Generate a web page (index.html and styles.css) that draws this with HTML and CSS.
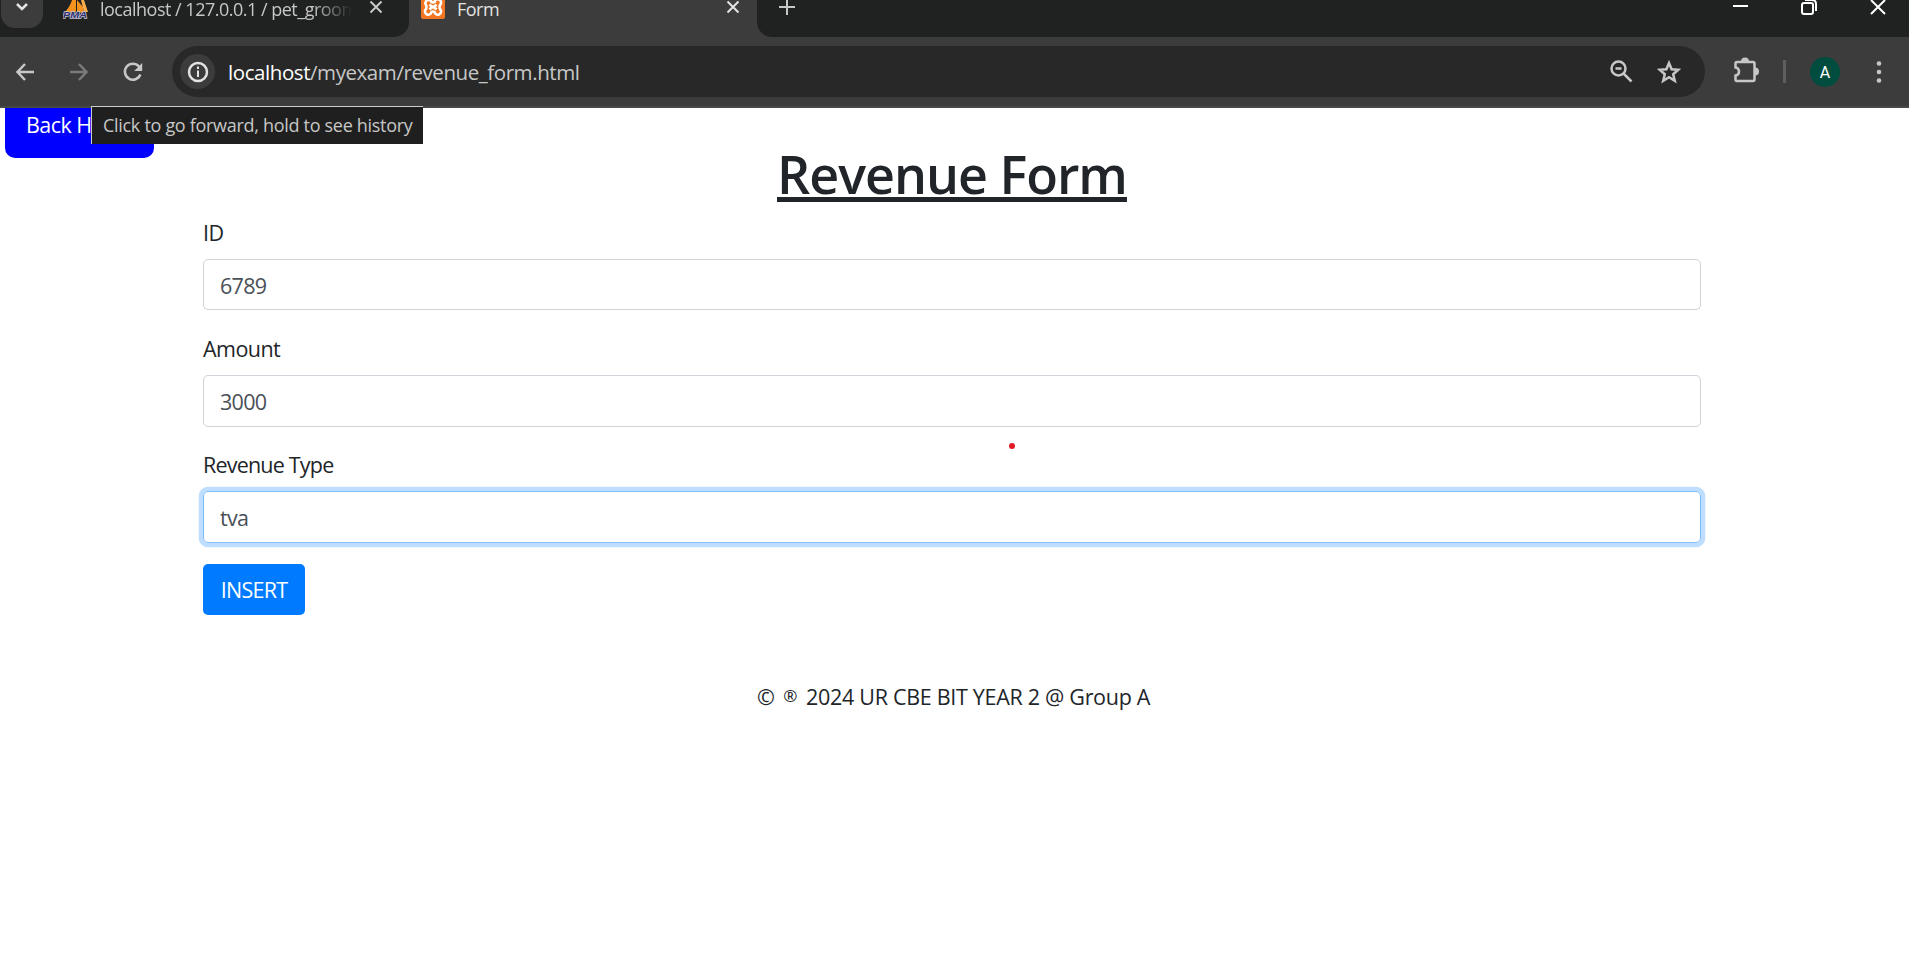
FILE: index.html
```html
<!DOCTYPE html>
<html lang="en">
<head>
<meta charset="utf-8">
<title>Form</title>
<link rel="stylesheet" href="styles.css">
</head>
<body>
<header class="browser">
  <div class="tabstrip">
    <div class="tab-search"><svg width="16" height="12" viewBox="0 0 16 12"><path d="M3 3l5 5 5-5" class="line w2"/></svg></div>
    <div class="tab tab-idle">
      <svg class="fav" width="26" height="20" viewBox="0 0 26 20"><path d="M1 13Q7 7 9 0h4v12zM14 12V0l6 7 1 6z" fill="#f6931e"/><path d="M21 12l-3-12h3l4 12z" fill="#f9ad4d"/><text x="0" y="18" textLength="24" lengthAdjust="spacingAndGlyphs" class="pma">PMA</text></svg>
      <span class="tab-title fade">localhost / 127.0.0.1 / pet_groom</span>
      <svg class="close" width="14" height="14" viewBox="0 0 14 14"><path d="M1.500 1.500l11 11M12.500 1.500l-11 11" class="line w2"/></svg>
    </div>
    <div class="tab tab-active">
      <svg class="fav" width="24" height="24" viewBox="0 0 24 24"><rect width="24" height="24" rx="2" fill="#f37623"/><path d="M8 5a3.200 3.200 0 0 0-3 5q1 2 0 4a3.300 3.300 0 1 0 5.500 3q1.500-1 3 0A3.300 3.300 0 1 0 19 14q-1-2 0-4a3.300 3.300 0 1 0-5.500-3q-1.500 1-3 0A3 3 0 0 0 8 5zM8.500 9.500l2 2h3l2-2M8.500 14.500l2-2h3l2 2" class="xampp"/></svg>
      <span class="tab-title">Form</span>
      <svg class="close" width="14" height="14" viewBox="0 0 14 14"><path d="M1.500 1.500l11 11M12.500 1.500l-11 11" class="line w2 light"/></svg>
    </div>
    <div class="strip-rest">
      <svg class="plus" width="16" height="16" viewBox="0 0 16 16"><path d="M0 7h16M8 0v15" class="line w2"/></svg>
      <div class="window-controls">
        <svg width="15" height="16" viewBox="0 0 15 16"><path d="M0 7h15" class="line w2 white"/></svg>
        <svg width="16" height="16" viewBox="0 0 16 16"><rect x="1" y="4" width="11" height="11" rx="2" class="line w2 white"/><path d="M4 1h7q4 0 4 4v7" class="line w2 white"/></svg>
        <svg width="16" height="16" viewBox="0 0 16 16"><path d="M1 1l14 14M15 1L1 15" class="line w2 white"/></svg>
      </div>
    </div>
  </div>
  <div class="toolbar">
    <svg class="back" width="18" height="18" viewBox="0 0 18 18"><path d="M18 9H1.500M9 1L1.500 9 9 17" class="line w25"/></svg>
    <svg class="forward" width="18" height="18" viewBox="0 0 18 18"><path d="M0 9h16.500M9 1l7.500 8L9 17" class="line w25 dim"/></svg>
    <svg class="reload" width="20" height="20" viewBox="0 0 20 20"><path d="M17.400 12.500A8 8 0 1 1 16 4.500L18 7" class="line w25"/><path d="M19.200 1v8h-8z" fill="#c7c7c7"/></svg>
    <div class="omnibox">
      <span class="info"><svg width="22" height="22" viewBox="0 0 22 22"><circle cx="11" cy="11" r="9" class="line w25 light"/><path d="M11 9.500v6.500M11 5.500v2.500" class="line w2 light"/></svg></span>
      <span class="url"><b>localhost</b>/myexam/revenue_form.html</span>
      <svg class="zoom-icon" width="23" height="23" viewBox="0 0 23 23"><circle cx="8.500" cy="8.500" r="7" class="line w25"/><path d="M13.500 13.500l8 8M5.500 8.500h6" class="line w25"/></svg>
      <svg class="star" width="24" height="24" viewBox="0 0 24 24"><path d="M12 3l2.600 6.200 6.700.6-5.100 4.400 1.600 6.600L12 17.300l-5.800 3.500 1.600-6.600-5.100-4.400 6.700-.6z" class="line w25"/></svg>
    </div>
    <svg class="puzzle" width="26" height="26" viewBox="0 0 26 26"><path d="M4 5h16q1.500 0 1.500 1.500v16q0 1.500-1.500 1.500H4q-1.500 0-1.500-1.500V18.500q3.500-.5 3.500-4T2.500 10.500V6.500Q2.500 5 4 5z" class="line w25"/><path d="M8 4.500a4 4 0 0 1 8 0zM22 10.500a4 4 0 0 1 0 8z" fill="#c7c7c7"/></svg>
    <span class="divider"></span>
    <span class="avatar">A</span>
    <svg class="menu" width="6" height="22" viewBox="0 0 6 22" fill="#c7c7c7"><circle cx="3" cy="2.500" r="2.300"/><circle cx="3" cy="11" r="2.300"/><circle cx="3" cy="19.500" r="2.300"/></svg>
  </div>
</header>
<main class="page">
  <a class="back-home">Back Home</a>
  <form class="container">
    <h1>Revenue Form</h1>
    <div class="group"><label>ID</label><div class="control">6789</div></div>
    <div class="group"><label>Amount</label><div class="control tall">3000</div></div>
    <div class="group last"><label class="long">Revenue Type</label><div class="control tall focused">tva</div></div>
    <button type="button" class="btn">INSERT</button>
  </form>
  <footer>© <span class="reg">®</span> 2024 UR CBE BIT YEAR 2 @ Group A</footer>
  <i class="dot"></i>
</main>
<div class="tooltip">Click to go forward, hold to see history</div>
</body>
</html>
```
FILE: styles.css
```css
* { box-sizing: border-box; }
body { margin: 0; width: 1909px; height: 979px; overflow: hidden; background: #fff; color: #212529; font-family: "Open Sans", "Noto Sans", sans-serif; font-size: 21.5px; letter-spacing: -.55px; position: relative; }
svg { display: block; flex: none; }
.line { fill: none; stroke: #c7c7c7; }
.w2 { stroke-width: 2; }
.w25 { stroke-width: 2.5; }
.light { stroke: #e3e3e3; }
.white { stroke: #fff; }
.dim { stroke: #7a7a7a; }
.browser { height: 108px; background: #3c3c3c; border-bottom: 2px solid #484848; }
.tabstrip { display: flex; height: 37px; background: linear-gradient(#202221, #202221) 0 0 / 60px 37px no-repeat #3c3c3c; }
.tab-search { width: 42px; height: 28px; margin-left: 1px; background: #3c3c3c; border-radius: 0 0 14px 14px; display: flex; justify-content: center; padding-top: 1px; }
.tab-search .line { stroke: #e3e3e3; stroke-width: 2.5; }
.tab { display: flex; height: 37px; align-items: flex-start; white-space: nowrap; }
.tab-idle { width: 366px; background: #202221; border-bottom-right-radius: 15px; padding-left: 20px; }
.tab-active { width: 348px; padding-left: 12px; }
.tab-title { font-size: 18px; line-height: 24px; height: 24px; margin-top: -3px; color: #c7c7c7; overflow: hidden; letter-spacing: -.5px; }
.tab-idle .tab-title { width: 252px; margin-left: 11px; }
.tab-active .tab-title { width: 264px; margin-left: 12px; color: #e3e3e3; }
.fade { -webkit-mask-image: linear-gradient(90deg, #000 84%, transparent); mask-image: linear-gradient(90deg, #000 84%, transparent); }
.tab-active .fav { margin-top: -5px; }
.close { margin-left: 17px; }
.tab-active .close { margin-left: 5px; }
.pma { font: italic bold 9px "Liberation Sans", sans-serif; letter-spacing: 0; fill: #30306e; stroke: #c4c4d5; stroke-width: 1.4px; paint-order: stroke; }
.xampp { fill: none; stroke: #fff; stroke-width: 2.6; }
.strip-rest { flex: 1; display: flex; justify-content: space-between; background: #202221; border-bottom-left-radius: 15px; padding: 0 23px 0 22px; }
.window-controls { display: flex; gap: 53px; margin-top: -1px; }
.toolbar { height: 69px; display: flex; align-items: center; background: #3c3c3c; border-top-right-radius: 10px; }
.back { margin-left: 16px; }
.forward { margin-left: 36px; }
.reload { margin-left: 35px; }
.omnibox { margin-left: 29px; width: 1533px; height: 51px; background: #282828; border-radius: 26px; display: flex; align-items: center; padding-left: 8px; }
.info { width: 35px; height: 35px; border-radius: 50%; background: #3c3c3c; display: grid; place-items: center; }
.url { margin-left: 13px; width: 1382px; color: #c7c7c7; font-size: 20.5px; letter-spacing: -.43px; line-height: 28px; white-space: nowrap; }
.url b { color: #fff; font-weight: 400; }
.star { margin-left: 24px; }
.puzzle { margin: -4px 0 0 28px; }
.divider { width: 3px; height: 23px; margin-left: 24px; background: #5e5e5e; }
.avatar { margin-left: 24px; width: 30px; height: 30px; border-radius: 50%; background: #004d40; color: #fff; font: 16px/31px Roboto, sans-serif; letter-spacing: 0; text-align: center; }
.menu { margin-left: 36px; }
.page { height: 871px; overflow: hidden; position: relative; }
.back-home { position: absolute; left: 5px; top: -15px; width: 149px; height: 65px; border-radius: 10px; background: #00f; color: #fff; padding: 18px 0 0 21px; line-height: 28px; white-space: nowrap; }
.container { width: 1498px; margin-left: 203px; padding-top: 33px; }
h1 { margin: 0; height: 77px; font-size: 52px; line-height: 66px; letter-spacing: -1px; font-weight: 600; text-align: center; text-decoration: underline; text-decoration-thickness: 5px; text-underline-offset: 3px; text-decoration-skip-ink: none; }
.group { height: 116px; }
label { display: block; height: 41px; line-height: 30px; }
.long { letter-spacing: -.8px; }
.control { height: 51px; border: 1px solid #ced4da; border-radius: 5px; padding: 0 16px; line-height: 51px; color: #495057; letter-spacing: -.7px; }
.control.tall { height: 52px; }
.focused { border-color: #80bdff; box-shadow: 0 0 0 4.300px #bfdeff; }
.last { height: 114px; }
.btn { display: block; border: 0; width: 102px; height: 51px; border-radius: 5px; padding: 0; background: #007bff; color: #fff; font: 21.5px/51px "Open Sans", sans-serif; letter-spacing: -.75px; }
footer { margin-top: 66px; padding-right: 2px; text-align: center; line-height: 31px; letter-spacing: -.3px; }
.reg { display: inline-block; width: 19px; margin: 0 1px; font-size: 17px; line-height: 20px; vertical-align: 3px; }
.dot { position: absolute; left: 1009px; top: 335px; width: 6px; height: 6px; border-radius: 50%; background: #e01b24; }
.tooltip { position: absolute; left: 91px; top: 106px; width: 332px; height: 38px; border: solid #ccc; border-width: 1px 0 0 1px; background: #1f1f1f; color: #c7c7c7; font-size: 18px; letter-spacing: -.3px; line-height: 36px; padding-left: 11px; white-space: nowrap; }
```
